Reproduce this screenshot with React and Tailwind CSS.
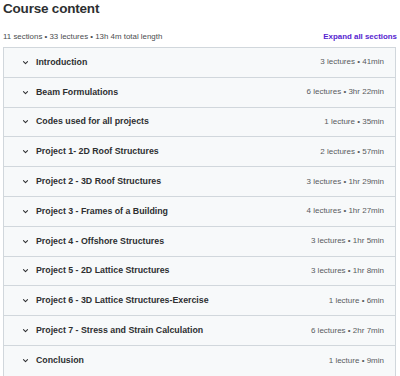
import React from 'react';

const sections = [
  { title: 'Introduction', meta: '3 lectures • 41min' },
  { title: 'Beam Formulations', meta: '6 lectures • 3hr 22min' },
  { title: 'Codes used for all projects', meta: '1 lecture • 35min' },
  { title: 'Project 1- 2D Roof Structures', meta: '2 lectures • 57min' },
  { title: 'Project 2 - 3D Roof Structures', meta: '3 lectures • 1hr 29min' },
  { title: 'Project 3 - Frames of a Building', meta: '4 lectures • 1hr 27min' },
  { title: 'Project 4 - Offshore Structures', meta: '3 lectures • 1hr 5min' },
  { title: 'Project 5 - 2D Lattice Structures', meta: '3 lectures • 1hr 8min' },
  { title: 'Project 6 - 3D Lattice Structures-Exercise', meta: '1 lecture • 6min' },
  { title: 'Project 7 - Stress and Strain Calculation', meta: '6 lectures • 2hr 7min' },
  { title: 'Conclusion', meta: '1 lecture • 9min' },
];

function Chevron() {
  return (
    <svg width="7" height="7" viewBox="0 0 24 24" fill="none" stroke="#2d2f31" strokeWidth="3.5" strokeLinecap="round" strokeLinejoin="round">
      <path d="M5 9l7 7 7-7" />
    </svg>
  );
}

export default function App() {
  return (
    <div className="w-[400px] h-[376px] bg-white overflow-hidden text-[#2d2f31] font-['Liberation_Sans',Arial,sans-serif]">
      <h2 className="text-[13.5px] font-bold leading-[16px] pl-[3px] pt-[1px] tracking-[-0.2px]">Course content</h2>
      <div className="flex items-center justify-between pl-[3px] pr-[3px] mt-[14px] h-[12px]">
        <span className="text-[7.9px] text-[#4a4d50]">11 sections • 33 lectures • 13h 4m total length</span>
        <span className="text-[7.9px] font-bold text-[#5624d0]">Expand all sections</span>
      </div>
      <div className="mt-[4px] ml-[3px] w-[393px] border border-[#d1d7dc] divide-y divide-[#d1d7dc]">
        {sections.map((s) => (
          <div key={s.title} className="flex items-center justify-between h-[29.8px] bg-[#f7f9fa] pl-[18px] pr-[11px]">
            <div className="flex items-center gap-[7px]">
              <Chevron />
              <span className="text-[8.8px] font-bold">{s.title}</span>
            </div>
            <span className="text-[8px] text-[#595c5f]">{s.meta}</span>
          </div>
        ))}
      </div>
    </div>
  );
}
